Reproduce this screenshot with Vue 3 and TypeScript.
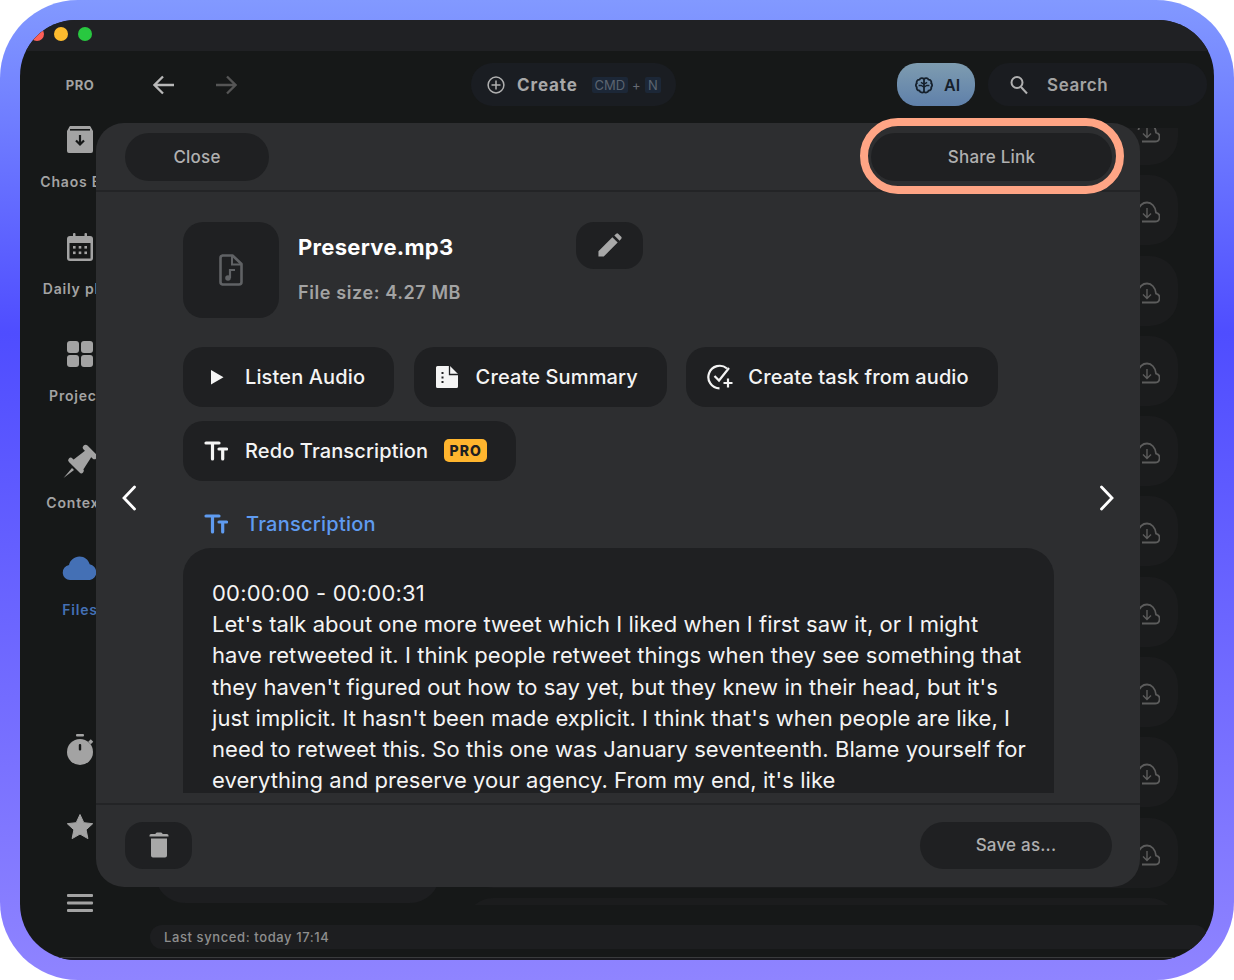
<script setup lang="ts">
const rows: number[] = Array.from({ length: 11 }, (_, i) => i)
const navItems: { label: string; key: string }[] = [
  { label: 'Chaos Box', key: 'box' },
  { label: 'Daily plan', key: 'cal' },
  { label: 'Projects', key: 'grid' },
  { label: 'Contexts', key: 'pin' },
  { label: 'Files', key: 'cloud' },
]
</script>

<template>
  <div class="frame">
    <div class="window">
      <div class="titlebar">
        <i class="light red"></i><i class="light yellow"></i><i class="light green"></i>
      </div>
      <div class="body">
        <aside class="sidebar">
          <div class="pro">PRO</div>
          <div v-for="item in navItems" :key="item.key" class="nav-item" :class="{ active: item.key === 'cloud' }">
            <div class="nav-icon">
              <svg v-if="item.key === 'box'" width="30" height="30" viewBox="0 0 30 30">
                <path d="M4 2.500C4 1.500 5 1 6 1h18c1 0 2 .5 2 1.500L28 6v20a2 2 0 0 1-2 2H4a2 2 0 0 1-2-2V6z" fill="#a3a3a3" />
                <rect x="5" y="4" width="20" height="1.600" fill="#161818" />
                <path d="M15 10v9M11 15.500l4 4 4-4" fill="none" stroke="#161818" stroke-width="2.200" />
              </svg>
              <svg v-else-if="item.key === 'cal'" width="30" height="30" viewBox="0 0 30 30">
                <rect x="2" y="4" width="26" height="25" rx="3" fill="#a3a3a3" />
                <rect x="8" y="1" width="2.500" height="5" rx="1" fill="#a3a3a3" />
                <rect x="19.500" y="1" width="2.500" height="5" rx="1" fill="#a3a3a3" />
                <rect x="4.500" y="11" width="21" height="15.500" fill="#161818" />
                <g fill="#a3a3a3">
                  <rect x="8" y="14" width="2.600" height="2.600" /><rect x="13.700" y="14" width="2.600" height="2.600" /><rect x="19.400" y="14" width="2.600" height="2.600" />
                  <rect x="8" y="19.500" width="2.600" height="2.600" /><rect x="13.700" y="19.500" width="2.600" height="2.600" /><rect x="19.400" y="19.500" width="2.600" height="2.600" />
                </g>
              </svg>
              <svg v-else-if="item.key === 'grid'" width="30" height="30" viewBox="0 0 30 30">
                <g fill="#a3a3a3">
                  <rect x="2" y="2" width="12" height="12" rx="3" /><rect x="16" y="2" width="12" height="12" rx="3" />
                  <rect x="2" y="16" width="12" height="12" rx="3" /><rect x="16" y="16" width="12" height="12" rx="3" />
                </g>
              </svg>
              <svg v-else-if="item.key === 'pin'" class="pin" width="36" height="36" viewBox="0 0 36 36">
                <g fill="#a3a3a3">
                  <rect x="19" y="6.250" width="18" height="5.500" rx="2.700" transform="rotate(45 28 9)" />
                  <path d="M24 7 30 13 21 27 11 17z" />
                  <rect x="4" y="20" width="20" height="5" rx="2.500" transform="rotate(45 14 22.500)" />
                  <path d="M10 25 12 27 1.500 35z" />
                </g>
              </svg>
              <svg v-else width="36" height="26" viewBox="0 0 36 26">
                <path d="M8 25a7.500 7.500 0 0 1-1-14.900C8 5 12.500 1.500 17.500 1.500c5 0 9 3.200 10.200 7.800A8 8 0 0 1 28 25z" fill="#4470b5" />
              </svg>
            </div>
            <div class="nav-label">{{ item.label }}</div>
          </div>
          <div class="side-bottom">
            <svg width="30" height="34" viewBox="0 0 30 34">
              <rect x="11" y="0" width="8" height="2.500" rx="1" fill="#a3a3a3" />
              <rect x="24" y="6" width="3.500" height="3.500" transform="rotate(45 25.750 7.750)" fill="#a3a3a3" />
              <circle cx="15" cy="18" r="13" fill="#a3a3a3" />
              <rect x="13.800" y="10" width="2.400" height="6.500" rx="1" fill="#161818" />
            </svg>
            <svg width="30" height="28" viewBox="0 0 30 28">
              <path d="M15 1.500l3.800 8.200 8.900 1-6.600 6.100 1.800 8.800-7.900-4.500-7.900 4.500 1.800-8.800-6.600-6.100 8.900-1z" fill="#a3a3a3" stroke="#a3a3a3" stroke-linejoin="round" />
            </svg>
            <svg width="30" height="20" viewBox="0 0 30 20">
              <g fill="#a3a3a3"><rect x="2" y="1" width="26" height="3" rx="1" /><rect x="2" y="8.500" width="26" height="3" rx="1" /><rect x="2" y="16" width="26" height="3" rx="1" /></g>
            </svg>
          </div>
        </aside>

        <main class="main">
          <header class="topbar">
            <div class="arrows">
              <svg width="22" height="22" viewBox="0 0 22 22"><path d="M21 11H2M10 2.500 1.500 11l8.500 8.500" fill="none" stroke="#b8b8b8" stroke-width="2.300" /></svg>
              <svg width="22" height="22" viewBox="0 0 22 22"><path d="M1 11h19M12 2.500l8.500 8.500-8.500 8.500" fill="none" stroke="#555" stroke-width="2.300" /></svg>
            </div>
            <div class="create">
              <svg width="18" height="18" viewBox="0 0 18 18"><circle cx="9" cy="9" r="7.900" fill="none" stroke="#b0b0b0" stroke-width="1.500" /><path d="M9 4.500v9M4.500 9h9" stroke="#b0b0b0" stroke-width="1.500" /></svg>
              <span class="create-label">Create</span>
              <span class="kbd cmd">CMD</span><span class="plus">+</span><span class="kbd n">N</span>
            </div>
            <div class="ai">
              <svg width="18" height="18" viewBox="0 0 20 20" fill="none" stroke="#15202c" stroke-width="2">
                <path d="M10 2.500V18M10 3.500A3 3 0 0 0 5 4a3 3 0 0 0-3 4 3 3 0 0 0 0 4.500 3 3 0 0 0 3 3.800 3 3 0 0 0 5 1.200" />
                <path d="M10 3.500A3 3 0 0 1 15 4a3 3 0 0 1 3 4 3 3 0 0 1 0 4.500 3 3 0 0 1-3 3.800 3 3 0 0 1-5 1.200" />
                <path d="M6.500 7 10 9M13.500 7 10 9M4 10.500h3l3 2M16 10.500h-3l-3 2" stroke-width="1.600" />
              </svg>
              <span>AI</span>
            </div>
            <div class="search">
              <svg width="20" height="20" viewBox="0 0 20 20" fill="none" stroke="#b0b0b0" stroke-width="2"><circle cx="8" cy="7.500" r="5.500" /><path d="m12 12 6 6.500" /></svg>
              <span>Search</span>
            </div>
          </header>

          <div class="list">
            <div class="left-card"></div>
            <div class="rows">
              <div v-for="r in rows" :key="r" class="row">
                <svg width="24" height="22" viewBox="0 0 24 22" fill="none" stroke="#5c5c5c" stroke-width="1.800">
                  <path d="M6 20.500h13a4.500 4.500 0 0 0 1-8.900C19.500 5.500 15.500 1.500 11 1.500 6.500 1.500 3 5 2.500 9" />
                  <path d="M11 7v9M7 12.500l4 4 4-4" stroke-width="1.400" />
                </svg>
              </div>
            </div>
          </div>

          <div class="status">Last synced: today 17:14</div>
        </main>
      </div>
      <div class="clip-line"></div>

      <section class="modal">
        <div class="modal-head">
          <button class="pill close">Close</button>
          <button class="pill share">Share Link</button>
        </div>
        <div class="modal-body">
          <div class="info">
            <div class="file-box">
              <svg width="24" height="32" viewBox="0 0 24 32" fill="none" stroke="#606265" stroke-width="2.600">
                <path d="M3.500 1.500h10L22.500 10v18a2.500 2.500 0 0 1-2.500 2.500H3.500A2.500 2.500 0 0 1 1.500 28V4a2.500 2.500 0 0 1 2-2.500z" stroke-linejoin="round" />
                <path d="M13 1.500V10.500h9.500" stroke-width="2" />
                <circle cx="9" cy="24" r="2.800" fill="#606265" stroke="none" />
                <path d="M11 24v-8h5" stroke-width="2.200" />
              </svg>
            </div>
            <div class="meta">
              <div class="name">Preserve.mp3</div>
              <div class="size">File size: 4.27 MB</div>
            </div>
            <button class="edit">
              <svg width="25" height="25" viewBox="0 0 26 26"><path d="M1.500 24.500V19L16 4.500l5.500 5.500L7 24.500zM18 2.500 20 .8a1.500 1.500 0 0 1 2 0L25.200 4a1.500 1.500 0 0 1 0 2L23.500 8z" fill="#a8a8a8" /></svg>
            </button>
          </div>

          <div class="actions">
            <button class="action">
              <span class="a-icon"><svg width="24" height="24" viewBox="0 0 24 24"><path d="M7 5v14.500L19.500 12.200z" fill="#f4f4f4" /></svg></span>
              Listen Audio
            </button>
            <button class="action">
              <span class="a-icon"><svg width="24" height="24" viewBox="0 0 24 24"><path d="M1 2.500A1.500 1.500 0 0 1 2.500 1H15l8 8v12.500a1.500 1.500 0 0 1-1.500 1.500h-19A1.500 1.500 0 0 1 1 21.500z" fill="#f4f4f4" /><path d="M14.500 1v8.500H23" fill="none" stroke="#1f2022" stroke-width="1.300" /><g fill="#1f2022"><rect x="6.500" y="7" width="2" height="2" /><rect x="6.500" y="11.500" width="2" height="2" /><rect x="6.500" y="16" width="2" height="2" /></g></svg></span>
              Create Summary
            </button>
            <button class="action">
              <span class="a-icon"><svg width="27" height="26" viewBox="0 0 27 26" fill="none" stroke="#f4f4f4" stroke-width="2.200"><path d="M20 4.500A11.300 11.300 0 1 0 12.500 24.400" /><path d="m7.500 12 4.500 4.500L22 4" /><path d="M21 14.500v9M16.500 19h9" /></svg></span>
              Create task from audio
            </button>
            <button class="action">
              <span class="a-icon"><svg width="24" height="20" viewBox="0 0 24 20" fill="none" stroke="#f4f4f4" stroke-width="3.200" stroke-linecap="round"><path d="M2 2h13M8.500 2v16M15 8h7.500M18.700 8v10" /></svg></span>
              Redo Transcription
              <span class="badge">PRO</span>
            </button>
          </div>

          <div class="section-head">
            <svg width="24" height="20" viewBox="0 0 24 20" fill="none" stroke="#5f9bf0" stroke-width="3.200" stroke-linecap="round"><path d="M2 2h13M8.500 2v16M15 8h7.500M18.700 8v10" /></svg>
            <span>Transcription</span>
          </div>

          <div class="transcript">
            <p><span class="stamp">00:00:00 - 00:00:31</span><br />Let's talk about one more tweet which I liked when I first saw it, or I might have retweeted it. I think people retweet things when they see something that they haven't figured out how to say yet, but they knew in their head, but it's just implicit. It hasn't been made explicit. I think that's when people are like, I need to retweet this. So this one was January seventeenth. Blame yourself for everything and preserve your agency. From my end, it's like</p>
          </div>
        </div>
        <div class="modal-foot">
          <button class="trash">
            <svg width="20" height="26" viewBox="0 0 20 26"><path d="M6.500 2c0-1 1-1.500 2-1.500h3c1 0 2 .5 2 1.500H18a1.500 1.500 0 0 1 1.500 1.500v1H.5v-1A1.500 1.500 0 0 1 2 2zM2 6.500h16v17a2 2 0 0 1-2 2H4a2 2 0 0 1-2-2z" fill="#a8a8a8" /></svg>
          </button>
          <button class="pill save">Save as...</button>
        </div>

        <svg class="chev left" width="16" height="26" viewBox="0 0 16 26"><path d="M13.500 2 3 13l10.500 11" fill="none" stroke="#fff" stroke-width="2.800" stroke-linecap="round" /></svg>
        <svg class="chev right" width="16" height="26" viewBox="0 0 16 26"><path d="M2.500 2 13 13 2.500 24" fill="none" stroke="#fff" stroke-width="2.800" stroke-linecap="round" /></svg>
        <div class="ring"></div>
      </section>
    </div>
  </div>
</template>

<style>
html, body { margin: 0; background: #fff; }
</style>

<style scoped>
.frame {
  width: 1234px;
  height: 980px;
  box-sizing: border-box;
  padding: 20px;
  border-radius: 78px;
  background: linear-gradient(180deg, #8299ff 0%, #4f4dff 34%, #8f84ff 100%);
  font-family: Inter, "Noto Sans", sans-serif;
}
.window {
  position: relative;
  height: 940px;
  border-radius: 56px;
  overflow: hidden;
  background: #161818;
  display: flex;
  flex-direction: column;
}
.titlebar {
  height: 31px;
  flex: none;
  background: #202124;
  display: flex;
  align-items: center;
  gap: 10px;
  padding: 0 0 3px 9.500px;
  box-sizing: border-box;
}
.light { width: 14.300px; height: 14.300px; border-radius: 50%; display: block; }
.red { background: #ff5f57; }
.yellow { background: #febc2e; }
.green { background: #28c840; }
.body { flex: 1; display: flex; min-height: 0; }
.sidebar {
  width: 120px;
  flex: none;
  display: flex;
  flex-direction: column;
  align-items: center;
  color: #a3a3a3;
}
.pro { font-size: 13px; font-weight: 700; letter-spacing: .5px; margin-top: 26px; line-height: 16px; }
.nav-item {
  height: 107px;
  flex: none;
  display: flex;
  flex-direction: column;
  align-items: center;
}
.nav-icon { height: 36px; margin-top: 29px; display: flex; align-items: center; justify-content: center; }
.nav-label { font-size: 14px; font-weight: 600; letter-spacing: .8px; line-height: 18px; margin-top: 15px; white-space: nowrap; }
.active { color: #4470b5; }
.side-bottom { margin-top: auto; margin-bottom: 44px; display: flex; flex-direction: column; align-items: center; gap: 45px; }
.side-bottom svg:nth-child(3) { margin-top: 7px; }
.main { flex: 1; min-width: 0; display: flex; flex-direction: column; position: relative; }
.topbar { height: 72px; flex: none; display: flex; align-items: flex-start; padding-top: 12px; box-sizing: border-box; }
.arrows { display: flex; gap: 40px; padding: 11px 0 0 13px; width: 331px; box-sizing: border-box; }
.create {
  width: 205px; height: 43px; box-sizing: border-box; border-radius: 22px; background: #1a1d22;
  display: flex; align-items: center; padding-left: 16px; color: #a8a8a8;
}
.create-label { font-size: 17px; font-weight: 700; margin: 0 14px 0 12px; letter-spacing: .9px; }
.kbd {
  font-size: 13px; color: #5b6470; background: #1c2737; height: 16px; line-height: 16px; border-radius: 2px; text-align: center;
}
.cmd { width: 36px; }
.n { width: 16px; }
.plus { font-size: 13px; color: #666a72; width: 17px; text-align: center; }
.ai {
  margin-left: 221px; width: 78px; height: 43px; border-radius: 20px; box-sizing: border-box; padding-left: 18px;
  background: linear-gradient(180deg, #7e9cb0 0%, #5f80aa 100%);
  display: flex; align-items: center; gap: 11px;
  color: #15202c; font-size: 16px; font-weight: 600;
}
.search {
  margin-left: 13px; width: 219px; height: 43px; box-sizing: border-box; border-radius: 21px; background: #1a1c20;
  display: flex; align-items: center; padding-left: 21px; gap: 18px;
  color: #a3a3a3; font-size: 17px; font-weight: 600; letter-spacing: .6px;
}
.list { height: 777px; margin-top: 5px; flex: none; overflow: hidden; display: flex; gap: 25px; padding-left: 15px; }
.left-card { width: 285px; height: 775px; flex: none; border-radius: 0 0 30px 30px; background: #1d1e20; }
.rows { width: 713px; flex: none; margin-top: -33px; display: flex; flex-direction: column; gap: 10.300px; }
.row {
  height: 70px; flex: none; border-radius: 28px; background: #1b1c1d;
  display: flex; align-items: center; justify-content: flex-end; padding: 4px 18px 0 0; box-sizing: border-box;
}
.status {
  margin: 20px 7px 0 10px; height: 24px; flex: none; border-radius: 12px; background: #1d1e20;
  color: #8e8e8e; font-size: 13px; font-weight: 500; letter-spacing: .6px; line-height: 24px; padding-left: 14px;
}
.clip-line { height: 3px; flex: none; box-sizing: border-box; border-top: 1px solid #3a3b3d; background: #1a1a1e; }
.modal {
  position: absolute; left: 76px; top: 103px; width: 1044px; height: 764px;
  border-radius: 28px; background: #2d2e30;
  display: flex; flex-direction: column;
}
button { font-family: inherit; border: 0; padding: 0; cursor: pointer; }
.modal-head {
  height: 69px; flex: none; box-sizing: border-box; border-bottom: 2.500px solid #232426;
  display: flex; justify-content: space-between; padding: 10px 28px 0 29px;
}
.pill {
  height: 48px; border-radius: 24px; background: #1f2022; color: #b0b0b0;
  font-size: 17px; font-weight: 500; letter-spacing: .2px;
}
.close { width: 144px; }
.share { width: 241px; }
.modal-body { flex: 1; min-height: 0; padding: 30px 86px 10px 87px; display: flex; flex-direction: column; box-sizing: border-box; }
.info { display: flex; height: 96px; flex: none; }
.file-box { width: 96px; height: 96px; border-radius: 20px; background: #1f2022; display: flex; align-items: center; justify-content: center; flex: none; }
.meta { width: 297px; box-sizing: border-box; padding-left: 19px; flex: none; }
.name { color: #fff; font-size: 22px; font-weight: 700; line-height: 28px; margin-top: 11px; letter-spacing: .3px; }
.size { color: #a3a3a3; font-size: 18px; font-weight: 600; line-height: 24px; margin-top: 20px; letter-spacing: .6px; }
.edit { width: 67px; height: 47px; border-radius: 18px; background: #1f2022; display: flex; align-items: center; justify-content: center; }
.actions { display: flex; flex-wrap: wrap; gap: 14.500px 19.500px; margin-top: 29px; flex: none; }
.action {
  height: 59.500px; border-radius: 20px; background: #1f2022; color: #f4f4f4;
  display: flex; align-items: center; padding: 0 29px 0 21px;
  font-size: 20px; font-weight: 500; letter-spacing: .13px; white-space: nowrap;
}
.a-icon { width: 24px; height: 26px; margin-right: 17px; display: flex; align-items: center; }
.a-icon svg { flex: none; }
.badge {
  margin-left: 16px; width: 43px; height: 23px; border-radius: 5px; background: #ffb52e; color: #1f2022;
  font-size: 14px; font-weight: 800; letter-spacing: 1px; display: flex; align-items: center; justify-content: center;
}
.section-head { display: flex; align-items: center; gap: 18px; margin: 30.500px 0 0 21px; height: 26px; flex: none; color: #5f9bf0; font-size: 20px; font-weight: 500; letter-spacing: .25px; }
.transcript {
  flex: 1; min-height: 0; margin-top: 11px; overflow: hidden; border-radius: 28px 28px 0 0; background: #1f2022;
  padding: 30px 24px 0 29px;
  box-sizing: border-box;
}
.transcript p { margin: 0; color: #f4f4f4; font-size: 22px; line-height: 31.200px; font-weight: 400; letter-spacing: .05px; }
.stamp { letter-spacing: .2px; }
.modal-foot {
  height: 84px; flex: none; box-sizing: border-box; border-top: 2.500px solid #232426;
  display: flex; justify-content: space-between; padding: 16.500px 28px 0 29px;
}
.trash { width: 67px; height: 47px; border-radius: 18px; background: #1f2022; display: flex; align-items: center; justify-content: center; }
.save { width: 192px; height: 47px; }
.chev { position: absolute; top: 362px; }
.chev.left { left: 25px; }
.chev.right { right: 25px; }
.ring {
  position: absolute; left: 764px; top: -5px; width: 264px; height: 76px; box-sizing: border-box;
  border: 8px solid #ffa585; border-radius: 38px; pointer-events: none;
}
</style>
